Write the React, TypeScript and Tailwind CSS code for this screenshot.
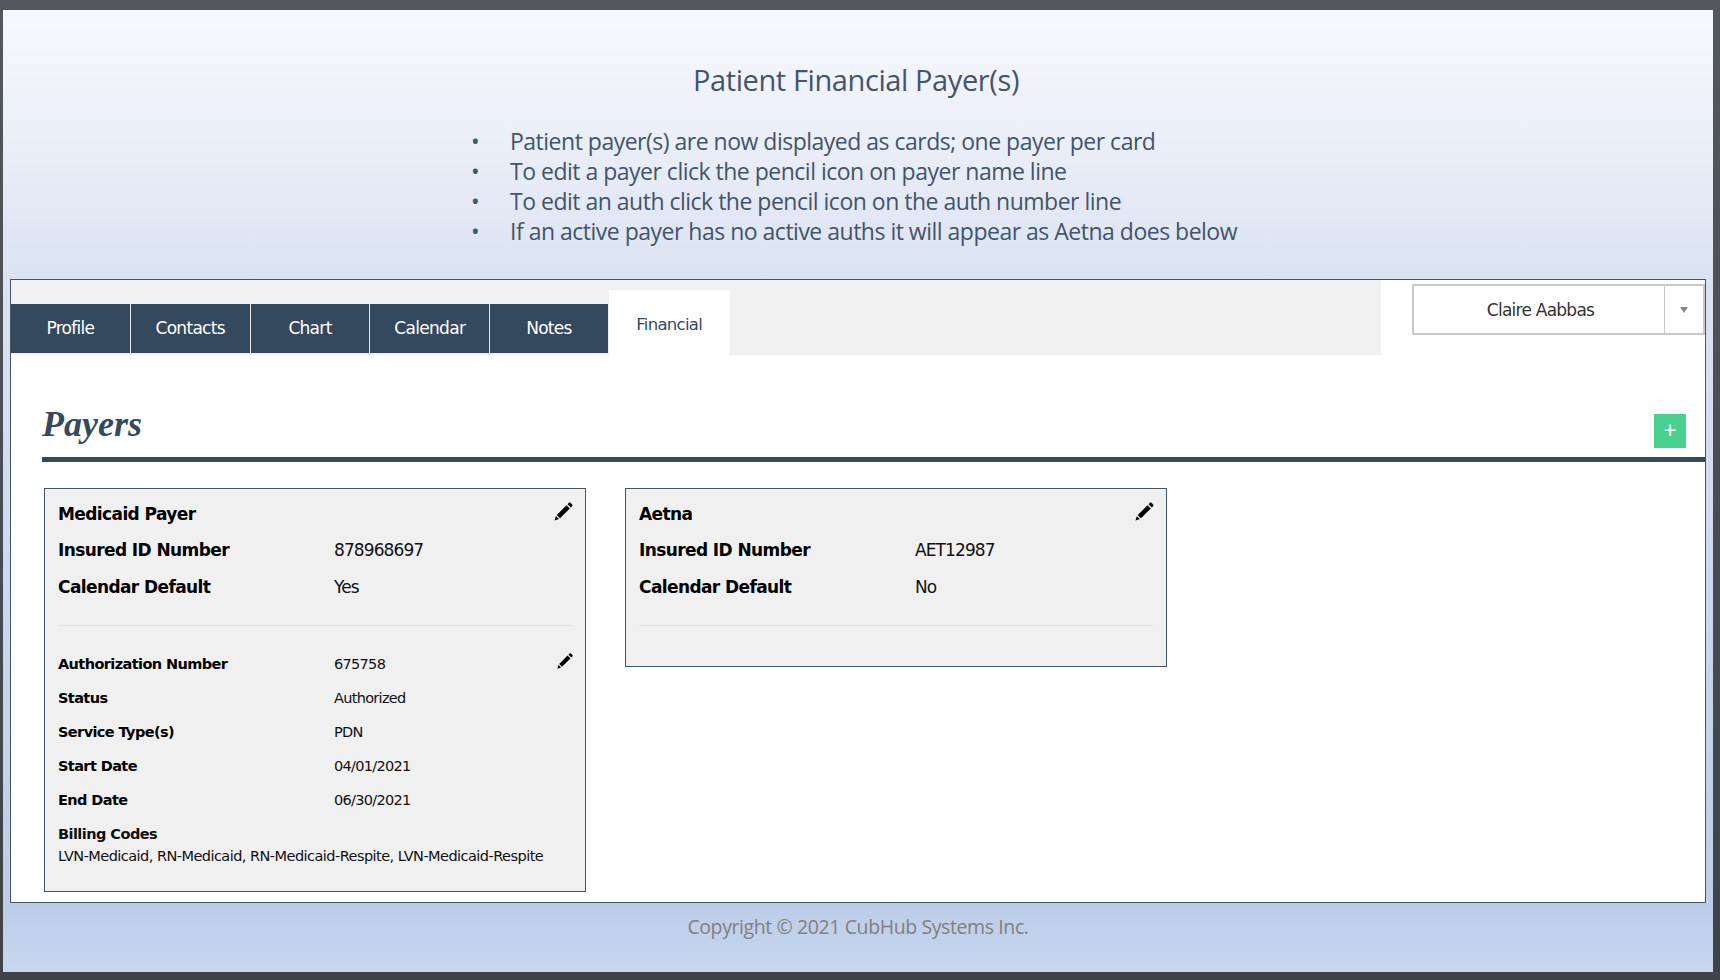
import React from "react";

const sans = "font-['Open_Sans','Noto_Sans',sans-serif]";
const ui = "font-['DejaVu_Sans',sans-serif]";

function Pencil({ size, small }: { size: number; small?: boolean }) {
  return (
    <svg viewBox="0 0 18 18" width={size} height={size} className={`relative left-[2px] shrink-0 ${small ? "top-[-4px]" : "top-[-3px]"}`} fill="#000">
      <path d="M11.6 3.6 14.4 6.4 6 14.8 3.2 12Z" />
      <path d="M2.5 12.9 5.1 15.5 1.3 16.7Z" />
      <path d="M12.5 2.7 13.6 1.6C14 1.2 14.6 1.2 15 1.6L16.4 3C16.8 3.4 16.8 4 16.4 4.4L15.3 5.5Z" />
    </svg>
  );
}

function Row({ big, label, value, icon }: { big?: boolean; label: string; value?: string; icon?: boolean }) {
  return (
    <div className={`flex items-center ${big ? "h-[36.5px]" : "h-[34px]"}`}>
      <div className={`w-[276px] font-bold text-black ${big ? "text-[17px] tracking-[-0.6px]" : "text-[14.5px] tracking-[-0.6px]"}`}>{label}</div>
      <div className={`flex-1 text-[#111] ${big ? "text-[17px] tracking-[-0.9px]" : "text-[14.5px] tracking-[-0.7px]"}`}>{value}</div>
      {icon && <Pencil size={big ? 21 : 18} small={!big} />}
    </div>
  );
}

function PayerHead({ name, id, def }: { name: string; id: string; def: string }) {
  return (
    <>
      <Row big label={name} icon />
      <Row big label="Insured ID Number" value={id} />
      <Row big label="Calendar Default" value={def} />
    </>
  );
}

const tabs = ["Profile", "Contacts", "Chart", "Calendar", "Notes"];
const bullets = [
  "Patient payer(s) are now displayed as cards; one payer per card",
  "To edit a payer click the pencil icon on payer name line",
  "To edit an auth click the pencil icon on the auth number line",
  "If an active payer has no active auths it will appear as Aetna does below",
];

export default function App() {
  return (
    <div className="h-[980px] w-[1720px] overflow-hidden bg-gradient-to-b from-[#54585c] to-[#3f4347] pt-[10px] pl-[3px] pr-[7px]">
      <div className={`flex h-[962px] flex-col bg-[linear-gradient(to_bottom,#f8f9fd_0%,#dbe3f2_28%,#bccde8_93%,#c8d6ee_100%)] ${sans}`}>
        <div className="h-[269px] text-[#44546a]">
          <h1 className="pt-[50px] pr-[4px] text-center text-[29px] leading-[40px] tracking-[-0.4px]">Patient Financial Payer(s)</h1>
          <ul className="mt-[26px] text-[23px] leading-[30px] tracking-[-0.5px]">
            {bullets.map((b) => (
              <li key={b} className="flex">
                <span className="ml-[468px] w-[39px]">•</span>
                <span>{b}</span>
              </li>
            ))}
          </ul>
        </div>
        <div className="mx-[7px] flex h-[624px] flex-col border border-[#44546a] bg-white">
          <div className="flex h-[75px] shrink-0">
            <div className="flex w-[1370px] items-start bg-[#f0f0f0]">
              <div className="mt-[24px] flex h-[50px]">
                {tabs.map((t) => (
                  <div key={t} className={`flex h-[49px] w-[119.8px] items-center justify-center border-r border-[#e8e8e8] bg-[#34495e] text-[17px] tracking-[-0.7px] text-white last:w-[117.5px] last:border-r-0 ${ui}`}>
                    {t}
                  </div>
                ))}
              </div>
              <div className={`mt-[10px] ml-[1px] flex h-[65px] w-[121px] justify-center bg-white pt-[25px] text-[16.5px] leading-[20px] tracking-[-0.7px] text-[#34495e] ${ui}`}>Financial</div>
            </div>
            <div className="mt-[4px] ml-[31px] flex h-[51px] w-[293px] border-2 border-[#c8c8c8]">
              <div className={`flex flex-1 items-center justify-center border-r border-[#c8c8c8] pt-[3px] pl-[3px] text-[17px] tracking-[-0.75px] text-[#333] ${ui}`}>Claire Aabbas</div>
              <div className="flex w-[38px] items-center justify-center">
                <span className="h-0 w-0 border-x-[4px] border-t-[6px] border-x-transparent border-t-[#888]" />
              </div>
            </div>
          </div>
          <div className="ml-[31px] flex h-[107px] shrink-0 flex-col">
            <div className="box-content flex h-[102px] items-start justify-between border-b-[5px] border-[#34495e]">
              <div className="mt-[45px] font-['Liberation_Serif',serif] text-[36px] leading-[48px] font-bold text-[#34495e] italic">Payers</div>
              <div className="mt-[59px] mr-[19px] flex h-[34px] w-[32px] items-center justify-center bg-[#48d18e] pb-[2px] text-[23px] leading-none text-white">+</div>
            </div>
          </div>
          <div className={`mt-[26px] ml-[33px] flex items-start gap-[39px] text-[#111] ${ui}`}>
            <div className="h-[404px] w-[542px] border border-[#44546a] bg-[#f0f0f0] px-[13px] pt-[7px]">
              <PayerHead name="Medicaid Payer" id="878968697" def="Yes" />
              <div className="mt-[19.5px] mb-[22px] h-px bg-[#e2e2e2]" />
              <Row label="Authorization Number" value="675758" icon />
              <Row label="Status" value="Authorized" />
              <Row label="Service Type(s)" value="PDN" />
              <Row label="Start Date" value="04/01/2021" />
              <Row label="End Date" value="06/30/2021" />
              <div className="mt-[6px] text-[14.5px] leading-[21.5px] tracking-[-0.54px]">
                <div className="font-bold">Billing Codes</div>
                <div>LVN-Medicaid, RN-Medicaid, RN-Medicaid-Respite, LVN-Medicaid-Respite</div>
              </div>
            </div>
            <div className="h-[179px] w-[542px] border border-[#44546a] bg-[#f0f0f0] px-[13px] pt-[7px]">
              <PayerHead name="Aetna" id="AET12987" def="No" />
              <div className="mt-[19.5px] h-px bg-[#e2e2e2]" />
            </div>
          </div>
        </div>
        <div className="pt-[11px] text-center text-[19.5px] leading-[26px] tracking-[-0.4px] text-[#808080]">Copyright © 2021 CubHub Systems Inc.</div>
      </div>
    </div>
  );
}
